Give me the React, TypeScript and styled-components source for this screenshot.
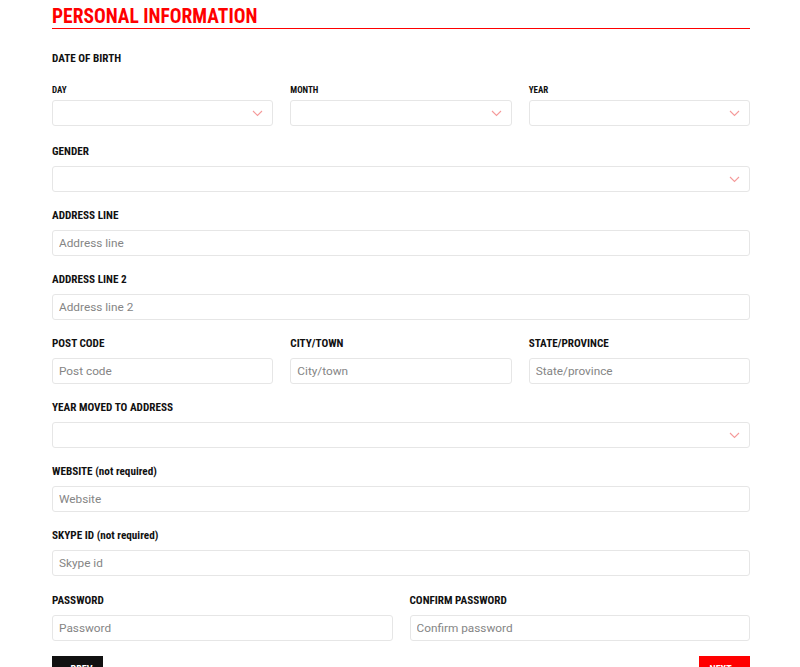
import React from 'react'
import styled, { createGlobalStyle } from 'styled-components'

const GlobalStyle = createGlobalStyle`
  * { box-sizing: border-box; }
  body {
    margin: 0;
    background: #fff;
    font-family: 'Roboto', 'Liberation Sans', sans-serif;
  }
`

const Chevron = () => (
  <Arrow width="11" height="7" viewBox="0 0 11 7">
    <path d="M1 1 L5.5 5.5 L10 1" fill="none" stroke="#f59a9a" strokeWidth="1.1" />
  </Arrow>
)

const SelectBox = ({ label }: { label?: string }) => (
  <SelectWrap>
    <Select aria-label={label} defaultValue="">
      <option value=""></option>
    </Select>
    <Chevron />
  </SelectWrap>
)

const App = () => {
  return (
    <>
      <GlobalStyle />
      <Page>
        <Title>PERSONAL INFORMATION</Title>

        <Group $top={23} $bottom={19}>
          <Label>DATE OF BIRTH</Label>
          <Columns $cols={3}>
            <div>
              <SubLabel>DAY</SubLabel>
              <SelectBox label="Day" />
            </div>
            <div>
              <SubLabel>MONTH</SubLabel>
              <SelectBox label="Month" />
            </div>
            <div>
              <SubLabel>YEAR</SubLabel>
              <SelectBox label="Year" />
            </div>
          </Columns>
        </Group>

        <Group>
          <Label>GENDER</Label>
          <SelectBox label="Gender" />
        </Group>

        <Group>
          <Label>ADDRESS LINE</Label>
          <Input placeholder="Address line" />
        </Group>

        <Group>
          <Label>ADDRESS LINE 2</Label>
          <Input placeholder="Address line 2" />
        </Group>

        <Columns $cols={3}>
          <Group>
            <Label>POST CODE</Label>
            <Input placeholder="Post code" />
          </Group>
          <Group>
            <Label>CITY/TOWN</Label>
            <Input placeholder="City/town" />
          </Group>
          <Group>
            <Label>STATE/PROVINCE</Label>
            <Input placeholder="State/province" />
          </Group>
        </Columns>

        <Group>
          <Label>YEAR MOVED TO ADDRESS</Label>
          <SelectBox label="Year moved to address" />
        </Group>

        <Group>
          <Label>WEBSITE (not required)</Label>
          <Input placeholder="Website" />
        </Group>

        <Group $bottom={18}>
          <Label>SKYPE ID (not required)</Label>
          <Input placeholder="Skype id" />
        </Group>

        <Columns $cols={2}>
          <Group $bottom={15}>
            <Label>PASSWORD</Label>
            <Input type="password" placeholder="Password" />
          </Group>
          <Group $bottom={15}>
            <Label>CONFIRM PASSWORD</Label>
            <Input type="password" placeholder="Confirm password" />
          </Group>
        </Columns>

        <Buttons>
          <NavButton $color="#111">
            <span>&#8249;</span> PREV
          </NavButton>
          <NavButton $color="#ff0000">
            NEXT <span>&#8250;</span>
          </NavButton>
        </Buttons>
      </Page>
    </>
  )
}

export default App

const Page = styled.div`
width: 698px;
margin: 0 50px 0 52px;
padding-top: 5px;
`

const Title = styled.h1`
margin: 0;
font-family: 'Roboto Condensed', 'DejaVu Sans Condensed', 'Roboto', sans-serif;
font-weight: 700;
font-size: 19.5px;
line-height: 23px;
color: #ff0000;
border-bottom: 1.5px solid #ff0000;
`

const Group = styled.div<{ $top?: number; $bottom?: number }>`
margin-top: ${p => p.$top ?? 0}px;
margin-bottom: ${p => p.$bottom ?? 17}px;
`

const Label = styled.div`
font-family: 'Roboto Condensed', 'DejaVu Sans Condensed', 'Roboto', sans-serif;
font-weight: 700;
font-size: 11.2px;
line-height: 14px;
color: #111;
margin-bottom: 7px;
`

const SubLabel = styled.div`
font-family: 'Roboto Condensed', 'DejaVu Sans Condensed', 'Roboto', sans-serif;
font-weight: 700;
font-size: 9px;
line-height: 10px;
color: #111;
margin: 12px 0 5px;
`

const Columns = styled.div<{ $cols: number }>`
display: grid;
grid-template-columns: repeat(${p => p.$cols}, 1fr);
column-gap: 17px;
`

const fieldBase = `
width: 100%;
height: 26px;
border: 1px solid #e6e6e6;
border-radius: 3px;
background: #fff;
font-family: 'Roboto', 'Liberation Sans', sans-serif;
font-size: 11.8px;
color: #333;
padding: 0 6px;
outline: none;
`

const Input = styled.input`
${fieldBase}
display: block;

&::placeholder {
  color: #858585;
}
`

const SelectWrap = styled.div`
position: relative;
`

const Select = styled.select`
${fieldBase}
display: block;
appearance: none;
-webkit-appearance: none;
`

const Arrow = styled.svg`
position: absolute;
right: 10px;
top: 10px;
pointer-events: none;
`

const Buttons = styled.div`
display: flex;
justify-content: space-between;
`

const NavButton = styled.button<{ $color: string }>`
width: 51px;
height: 26px;
border: none;
border-radius: 0;
background: ${p => p.$color};
color: #fff;
font-family: 'Roboto Condensed', 'DejaVu Sans Condensed', 'Roboto', sans-serif;
font-weight: 700;
font-size: 10px;
padding: 0;
display: flex;
align-items: center;
justify-content: center;
gap: 4px;

span {
  font-size: 14px;
  line-height: 10px;
}
`
